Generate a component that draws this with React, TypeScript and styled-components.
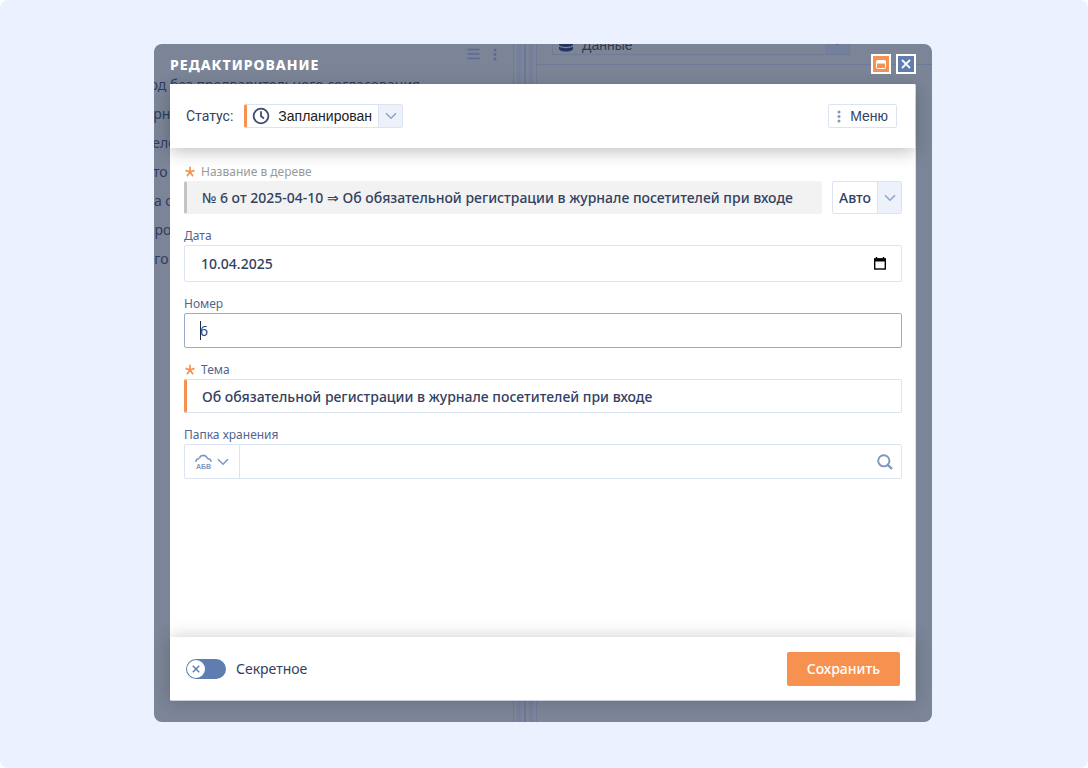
import React from "react";
import styled, { createGlobalStyle } from "styled-components";

const GlobalStyle = createGlobalStyle`
  * { box-sizing: border-box; }
  body {
    margin: 0;
    background: #fff;
    color: #32415f;
    font: 14px/20px "Noto Sans", sans-serif;
  }
  button, input, select { font: inherit; color: inherit; margin: 0; }
`;

const Page = styled.div`
  display: flex;
  min-height: 100vh;
  padding: 44px 156px 46px 154px;
  background: #ebf1fe;
  border-radius: 8px;
`;

const Stage = styled.div`
  flex: 1;
  min-width: 0;
  display: grid;
  grid-template: minmax(0, 1fr) / minmax(0, 1fr);
  background: #7b8597;
  border-radius: 8px;
  overflow: hidden;
  & > * { grid-area: 1 / 1; }
`;

/* Dimmed workspace behind the dialog */
const Workspace = styled.div`
  display: flex;
  min-height: 0;
  overflow: hidden;
  color: #2f3d5f;
`;

const TextPane = styled.section`
  flex: 0 0 359px;
  overflow: hidden;
`;

const PaneTools = styled.div`
  display: flex;
  justify-content: flex-end;
  align-items: center;
  gap: 13px;
  height: 20px;
  padding-right: 16px;
  color: #5a6a94;
`;

const Paragraph = styled.p`
  margin: 6px 0 0 -8px;
  line-height: 29px;
  white-space: pre;
`;

const Splitter = styled.div`
  flex: 0 0 24px;
  display: flex;
  justify-content: space-between;
  border: solid #6e7a96;
  border-width: 0 1px;
  padding: 0 3px;
`;

const Strip = styled.span<{ $thin?: boolean }>`
  width: ${(p) => (p.$thin ? 2 : 4)}px;
  background: ${(p) => (p.$thin ? "#6b7899" : "#747f9b")};
`;

const DataPane = styled.section`
  flex: 1;
  min-width: 0;
`;

const DataBar = styled.div`
  display: flex;
  height: 21px;
  padding: 0 82px 9px 15px;
  border-bottom: 1px solid #6e7a98;
`;

const DataPicker = styled.div`
  flex: 1;
  display: flex;
  align-items: flex-end;
  gap: 9px;
  padding-left: 6px;
  border: solid #6e7a98;
  border-width: 0 1px 1px;
  font-family: "Liberation Sans", sans-serif;
  line-height: 18px;
  color: #303a50;
  svg { flex: none; }
  & > svg { margin-bottom: 2px; }
  span { flex: 1; }
`;

const DataArrow = styled.i`
  display: flex;
  align-items: flex-start;
  justify-content: center;
  overflow: hidden;
  width: 24px;
  height: 11px;
  background: #747f9b;
  color: #4d5d88;
  svg { margin-top: -5px; }
`;

/* Dialog */
const DialogLayer = styled.div`
  display: flex;
  flex-direction: column;
  min-width: 0;
  padding: 0 16px 21px;
  z-index: 1;
`;

const TitleBar = styled.header`
  display: flex;
  align-items: center;
  gap: 5px;
  height: 40px;
`;

const Title = styled.h1`
  flex: 1;
  margin: 0;
  padding-top: 2px;
  font-size: 14px;
  line-height: 20px;
  font-weight: 800;
  letter-spacing: 1px;
  text-transform: uppercase;
  color: #fff;
`;

const WindowButton = styled.button<{ $accent?: boolean }>`
  display: flex;
  align-items: center;
  justify-content: center;
  width: 20px;
  height: 20px;
  padding: 0;
  border: 2px solid #fff;
  background: ${(p) => (p.$accent ? "#f79150" : "#5f7db1")};
  color: #fff;
`;

const Dialog = styled.form`
  flex: 1;
  display: flex;
  flex-direction: column;
  background: #fff;
  border: solid #dce4f3;
  border-width: 0 1px 1px 0;
  border-radius: 2px;
`;

const Toolbar = styled.div`
  position: relative;
  display: flex;
  align-items: center;
  gap: 11px;
  height: 64px;
  padding: 0 18px 0 16px;
  background: #fff;
  box-shadow: 0 4px 16px rgba(0, 0, 0, 0.24);
  font-family: Roboto, sans-serif;
`;

const Spacer = styled.span`
  flex: 1;
`;

const StatusPicker = styled.span`
  display: flex;
  align-items: center;
  height: 24px;
  padding-left: 5px;
  border: 1px solid #dce4f3;
  border-left: 3px solid #f79150;
  border-radius: 2px;
  color: #3c4b6e;
`;

const ModePicker = styled.span`
  display: flex;
  align-items: center;
  height: 33px;
  border: 1px solid #dce4f3;
  border-radius: 2px;
`;

const PlainSelect = styled.select<{ $status?: boolean }>`
  appearance: none;
  align-self: stretch;
  width: ${(p) => (p.$status ? 108 : 44)}px;
  padding: 0 0 0 ${(p) => (p.$status ? 8 : 6)}px;
  border: 0;
  outline: 0;
  background: transparent;
  font-family: ${(p) => (p.$status ? '"Liberation Sans", sans-serif' : "inherit")};
  font-weight: ${(p) => (p.$status ? 400 : 500)};
  color: ${(p) => (p.$status ? "#222" : "#32415f")};
`;

const ArrowCell = styled.span`
  display: flex;
  align-items: center;
  justify-content: center;
  align-self: stretch;
  width: 24px;
  border-left: 1px solid #dce4f3;
  background: #edf1fa;
  color: #8ea6cf;
`;

const MenuButton = styled.button`
  display: flex;
  align-items: center;
  gap: 9px;
  height: 24px;
  padding: 0 8px;
  border: 1px solid #dce4f3;
  border-radius: 2px;
  background: #fff;
  font-family: "Liberation Sans", sans-serif;
  svg { color: #7f97c0; }
`;

const Fields = styled.div`
  flex: 1;
  display: flex;
  flex-direction: column;
  gap: 13px;
  padding: 15px 13px 16px 14px;
`;

const Field = styled.div`
  display: flex;
  flex-direction: column;
`;

const Label = styled.label<{ $muted?: boolean }>`
  display: flex;
  align-items: center;
  gap: 6px;
  height: 18px;
  font-size: 12px;
  line-height: 18px;
  color: ${(p) => (p.$muted ? "#999" : "#53658a")};
  svg { margin-left: 1px; }
`;

const Row = styled.div`
  display: flex;
  gap: 10px;
`;

const TextInput = styled.input<{ $kind?: "locked" | "required" | "active" }>`
  flex: 1;
  min-width: 0;
  height: ${(p) => (p.$kind === "locked" ? 33 : p.$kind === "required" ? 34 : 35)}px;
  padding: 0 15px;
  border: 1px solid ${(p) => (p.$kind === "active" ? "#9aabcb" : "#dce4f3")};
  border-radius: 2px;
  outline: 0;
  background: #fff;
  font-weight: ${(p) => (p.$kind === "active" ? 400 : 500)};
  ${(p) => p.$kind === "required" && "border-left: 3px solid #f79150;"}
  ${(p) =>
    p.$kind === "locked" &&
    "border-color: #f2f2f2; border-left: 3px solid #c4c4c4; background: #f2f2f2;"}
  ${(p) =>
    p.$kind === "active" &&
    "background: linear-gradient(#1c2b4a, #1c2b4a) 15px 7px / 1px 19px no-repeat #fff;"}
`;

const Composite = styled.div<{ $tall?: boolean }>`
  display: flex;
  align-items: center;
  height: ${(p) => (p.$tall ? 37 : 35)}px;
  border: 1px solid #dce4f3;
  border-radius: 2px;
`;

const BareInput = styled.input`
  flex: 1;
  min-width: 0;
  align-self: stretch;
  padding: 0 16px;
  border: 0;
  outline: 0;
  background: transparent;
  font-weight: 500;
`;

const IconButton = styled.button<{ $tone: string; $width: number }>`
  display: flex;
  align-items: center;
  justify-content: center;
  gap: 5px;
  align-self: stretch;
  width: ${(p) => p.$width}px;
  padding: 0;
  border: 0;
  background: transparent;
  color: ${(p) => p.$tone};
  &:first-child { border-right: 1px solid #dce4f3; }
`;

const CaseMode = styled.span`
  display: flex;
  flex-direction: column;
  align-items: center;
  padding-top: 2px;
  font: 700 7px/8px "Liberation Sans", sans-serif;
`;

const Footer = styled.footer`
  position: relative;
  display: flex;
  align-items: center;
  justify-content: space-between;
  height: 63px;
  padding: 0 15px 0 16px;
  background: #fff;
  box-shadow: 0 0 16px rgba(0, 0, 0, 0.2);
`;

const ToggleLabel = styled.label`
  display: flex;
  align-items: center;
  gap: 10px;
`;

const Toggle = styled.span`
  display: flex;
  width: 40px;
  height: 20px;
  padding: 1px;
  border-radius: 10px;
  background: #5f7db1;
`;

const Knob = styled.span`
  display: flex;
  align-items: center;
  justify-content: center;
  width: 18px;
  height: 18px;
  border-radius: 9px;
  background: #fff;
  color: #5f7db1;
`;

const HiddenCheck = styled.input`
  position: absolute;
  opacity: 0;
`;

const SaveButton = styled.button`
  height: 34px;
  padding: 0 20px;
  border: 0;
  border-radius: 2px;
  background: #f79150;
  color: #fff;
  font-weight: 500;
`;

const Chevron = () => (
  <svg width="12" height="8" viewBox="0 0 12 8" fill="none" stroke="currentColor" strokeWidth="1.6">
    <path d="M1 1.2l5 5 5-5" />
  </svg>
);

const Dots = () => (
  <svg width="4" height="13" viewBox="0 0 4 13" fill="currentColor">
    <circle cx="2" cy="2" r="1.5" />
    <circle cx="2" cy="6.5" r="1.5" />
    <circle cx="2" cy="11" r="1.5" />
  </svg>
);

const Star = () => (
  <svg width="10" height="12" viewBox="0 0 10 12" stroke="#f79150" strokeWidth="1.7" fill="none">
    <path d="M5 0.8V6M0.5 4.4L5 6M9.5 4.4L5 6M2 10.2L5 6M8 10.2L5 6" />
  </svg>
);

const Cross = ({ size, width }: { size: number; width: number }) => (
  <svg width={size} height={size} viewBox="0 0 10 10" stroke="currentColor" strokeWidth={width} fill="none">
    <path d="M1 1l8 8M9 1l-8 8" />
  </svg>
);

export default function App() {
  return (
    <>
      <GlobalStyle />
      <Page>
        <Stage>
          <Workspace aria-hidden="true">
            <TextPane>
              <PaneTools>
                <svg width="13" height="12" viewBox="0 0 13 12" stroke="currentColor" strokeWidth="1.5">
                  <path d="M1 1.5h11M1 6h11M1 10.5h11" strokeLinecap="round" />
                </svg>
                <Dots />
              </PaneTools>
              <Paragraph>{" од без предварительного согласования\nурн\nтело\nсто\nва с\nпро\nого"}</Paragraph>
            </TextPane>
            <Splitter>
              <Strip />
              <Strip $thin />
              <Strip />
            </Splitter>
            <DataPane>
              <DataBar>
                <DataPicker>
                  <svg width="14" height="15" viewBox="0 0 14 15" fill="#22345f">
                    <path d="M0 0h14v3c-2 2.6-12 2.6-14 0zM0 4.6c3 2.2 11 2.2 14 0V8c-2 2.6-12 2.6-14 0zM0 9.6c3 2.2 11 2.2 14 0v2.6c-2 3.2-12 3.2-14 0z" />
                  </svg>
                  <span>Данные</span>
                  <DataArrow>
                    <Chevron />
                  </DataArrow>
                </DataPicker>
              </DataBar>
            </DataPane>
          </Workspace>

          <DialogLayer role="dialog" aria-labelledby="dialog-title">
            <TitleBar>
              <Title id="dialog-title">Редактирование</Title>
              <WindowButton $accent type="button" aria-label="Развернуть">
                <svg width="10" height="9" viewBox="0 0 10 9" fill="none" stroke="#fff">
                  <rect x="0.5" y="0.5" width="9" height="8" rx="1" />
                  <path d="M0.5 2h9" strokeWidth="3" />
                </svg>
              </WindowButton>
              <WindowButton type="button" aria-label="Закрыть">
                <Cross size={10} width={1.8} />
              </WindowButton>
            </TitleBar>

            <Dialog onSubmit={(e) => e.preventDefault()}>
              <Toolbar>
                <label htmlFor="status">Статус:</label>
                <StatusPicker>
                  <svg width="18" height="18" viewBox="0 0 18 18" fill="none" stroke="currentColor" strokeWidth="1.8">
                    <circle cx="9" cy="9" r="7.4" />
                    <path d="M9 4.2V9l3 2.6" />
                  </svg>
                  <PlainSelect $status id="status">
                    <option>Запланирован</option>
                  </PlainSelect>
                  <ArrowCell>
                    <Chevron />
                  </ArrowCell>
                </StatusPicker>
                <Spacer />
                <MenuButton type="button">
                  <Dots />
                  Меню
                </MenuButton>
              </Toolbar>

              <Fields>
                <Field>
                  <Label $muted htmlFor="tree-name">
                    <Star />
                    Название в дереве
                  </Label>
                  <Row>
                    <TextInput
                      id="tree-name"
                      $kind="locked"
                      readOnly
                      value="№ 6 от 2025-04-10 ⇒ Об обязательной регистрации в журнале посетителей при входе"
                    />
                    <ModePicker>
                      <PlainSelect aria-label="Режим названия">
                        <option>Авто</option>
                      </PlainSelect>
                      <ArrowCell>
                        <Chevron />
                      </ArrowCell>
                    </ModePicker>
                  </Row>
                </Field>

                <Field>
                  <Label htmlFor="date">Дата</Label>
                  <Composite $tall>
                    <BareInput id="date" defaultValue="10.04.2025" />
                    <IconButton type="button" $width={42} $tone="#000" aria-label="Открыть календарь">
                      <svg width="12" height="13" viewBox="0 0 12 13" fill="none" stroke="currentColor">
                        <rect x="0.7" y="2" width="10.6" height="10" strokeWidth="1.4" />
                        <path d="M0 3h12" strokeWidth="3" />
                        <path d="M2.5 0v2M9.5 0v2" strokeWidth="1.4" />
                      </svg>
                    </IconButton>
                  </Composite>
                </Field>

                <Field>
                  <Label htmlFor="number">Номер</Label>
                  <Row>
                    <TextInput id="number" $kind="active" defaultValue="6" />
                  </Row>
                </Field>

                <Field>
                  <Label htmlFor="subject">
                    <Star />
                    Тема
                  </Label>
                  <Row>
                    <TextInput
                      id="subject"
                      $kind="required"
                      defaultValue="Об обязательной регистрации в журнале посетителей при входе"
                    />
                  </Row>
                </Field>

                <Field>
                  <Label htmlFor="folder">Папка хранения</Label>
                  <Composite>
                    <IconButton type="button" $width={55} $tone="#7f97c0">
                      <CaseMode>
                        <svg width="17" height="9" viewBox="0 0 17 9" fill="none" stroke="currentColor" strokeWidth="1.7">
                          <path d="M1 7.8C0.8 5.6 2.4 4.6 4.2 4.8M4.2 4C6.2 0.6 10.4 0.6 12.4 4M12.2 4.8C14.6 4.6 16 5.6 16 7.8" />
                        </svg>
                        АБВ
                      </CaseMode>
                      <Chevron />
                    </IconButton>
                    <BareInput id="folder" />
                    <IconButton type="button" $width={32} $tone="#7f97c0" aria-label="Поиск">
                      <svg width="16" height="16" viewBox="0 0 16 16" fill="none" stroke="currentColor">
                        <circle cx="6.8" cy="6.8" r="5.6" strokeWidth="1.9" />
                        <path d="M10.8 10.8l4.2 4.2" strokeWidth="2.4" />
                      </svg>
                    </IconButton>
                  </Composite>
                </Field>
              </Fields>

              <Footer>
                <ToggleLabel>
                  <HiddenCheck type="checkbox" />
                  <Toggle>
                    <Knob>
                      <Cross size={8} width={1.9} />
                    </Knob>
                  </Toggle>
                  Секретное
                </ToggleLabel>
                <SaveButton type="submit">Сохранить</SaveButton>
              </Footer>
            </Dialog>
          </DialogLayer>
        </Stage>
      </Page>
    </>
  );
}
